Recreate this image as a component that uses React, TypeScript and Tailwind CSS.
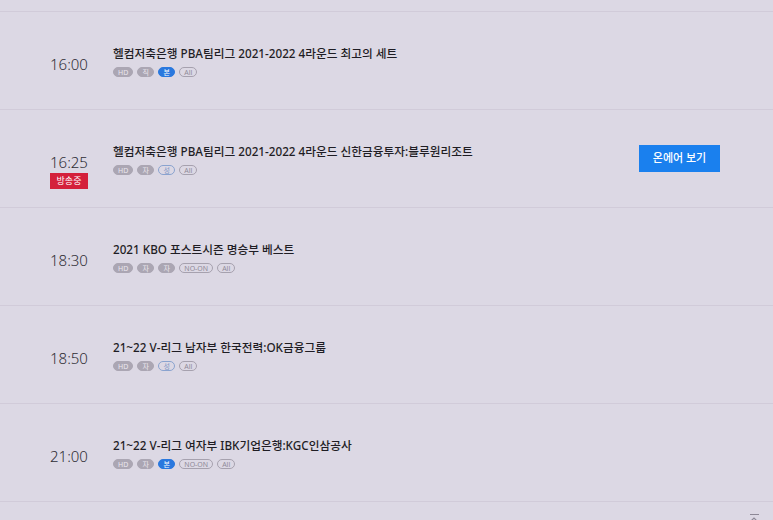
import React from "react";

type Tag = { label: string; kind: "gray" | "blue" | "line" | "lineBlue" };

type Show = {
	time: string;
	title: string;
	tags: Tag[];
	live?: boolean;
};

const shows: Show[] = [
	{
		time: "16:00",
		title: "헬컴저축은행 PBA팀리그 2021-2022 4라운드 최고의 세트",
		tags: [
			{ label: "HD", kind: "gray" },
			{ label: "직", kind: "gray" },
			{ label: "본", kind: "blue" },
			{ label: "All", kind: "line" },
		],
	},
	{
		time: "16:25",
		title: "헬컴저축은행 PBA팀리그 2021-2022 4라운드 신한금융투자:블루원리조트",
		live: true,
		tags: [
			{ label: "HD", kind: "gray" },
			{ label: "자", kind: "gray" },
			{ label: "성", kind: "lineBlue" },
			{ label: "All", kind: "line" },
		],
	},
	{
		time: "18:30",
		title: "2021 KBO 포스트시즌 명승부 베스트",
		tags: [
			{ label: "HD", kind: "gray" },
			{ label: "자", kind: "gray" },
			{ label: "자", kind: "gray" },
			{ label: "NO-ON", kind: "line" },
			{ label: "All", kind: "line" },
		],
	},
	{
		time: "18:50",
		title: "21~22 V-리그 남자부 한국전력:OK금융그룹",
		tags: [
			{ label: "HD", kind: "gray" },
			{ label: "자", kind: "gray" },
			{ label: "성", kind: "lineBlue" },
			{ label: "All", kind: "line" },
		],
	},
	{
		time: "21:00",
		title: "21~22 V-리그 여자부 IBK기업은행:KGC인삼공사",
		tags: [
			{ label: "HD", kind: "gray" },
			{ label: "자", kind: "gray" },
			{ label: "본", kind: "blue" },
			{ label: "NO-ON", kind: "line" },
			{ label: "All", kind: "line" },
		],
	},
];

const tagStyles: Record<Tag["kind"], string> = {
	gray: "bg-[#aba6b3] text-[#ebe7ef] border-[#aba6b3]",
	blue: "bg-[#2a78de] text-white border-[#2a78de]",
	line: "bg-transparent text-[#8f8a98] border-[#a6a1ae]",
	lineBlue: "bg-transparent text-[#7f97c4] border-[#8aa3cf]",
};

function TagPill({ tag }: { tag: Tag }) {
	return (
		<span
			className={`flex h-[10px] min-w-[17px] items-center justify-center rounded-full border px-[4px] text-[7px] leading-none ${tagStyles[tag.kind]}`}
		>
			{tag.label}
		</span>
	);
}

function Row({ show }: { show: Show }) {
	return (
		<div className="flex h-[98px] border-b border-[#d1cbd9]">
			{/* time column */}
			<div className="w-[113px] shrink-0 pl-[50px] pt-[42px]">
				<div className="w-[38px] text-[15px] font-light leading-[20px] text-[#2f2d35]">
					{show.time}
				</div>
				{show.live && (
					<div className="mt-[1px] flex h-[16px] w-[38px] items-center justify-center bg-[#d4203b] text-[9px] text-white">
						방송중
					</div>
				)}
			</div>

			{/* info */}
			<div className="flex-1 pt-[33px]">
				<div className="text-[11.7px] font-medium leading-[16px] text-[#1f1d24]">
					{show.title}
				</div>
				<div className="mt-[6px] flex gap-[4px]">
					{show.tags.map((t, i) => (
						<TagPill key={i} tag={t} />
					))}
				</div>
			</div>

			{show.live && (
				<div className="mr-[53px] self-center">
					<button className="flex h-[27px] w-[81px] items-center justify-center bg-[#1a80ee] text-[11px] font-medium text-white">
						온에어 보기
					</button>
				</div>
			)}
		</div>
	);
}

export default function App() {
	return (
		<div
			className="relative h-[520px] w-[773px] overflow-hidden bg-[#dcd8e4]"
			style={{ fontFamily: '"Noto Sans", "Noto Sans CJK KR", sans-serif' }}
		>
			<div className="h-[12px] border-b border-[#d1cbd9]" />
			{shows.map((s, i) => (
				<Row key={i} show={s} />
			))}

			{/* scroll to top */}
			<div className="absolute bottom-[-4px] right-[14px] flex flex-col items-center text-[#8d8896]">
				<div className="h-[1px] w-[9px] bg-[#8d8896]" />
				<svg width="10" height="8" viewBox="0 0 10 8" className="mt-[1px]">
					<path d="M1 6 L5 2 L9 6" fill="none" stroke="currentColor" strokeWidth="1.2" />
				</svg>
			</div>
		</div>
	);
}
